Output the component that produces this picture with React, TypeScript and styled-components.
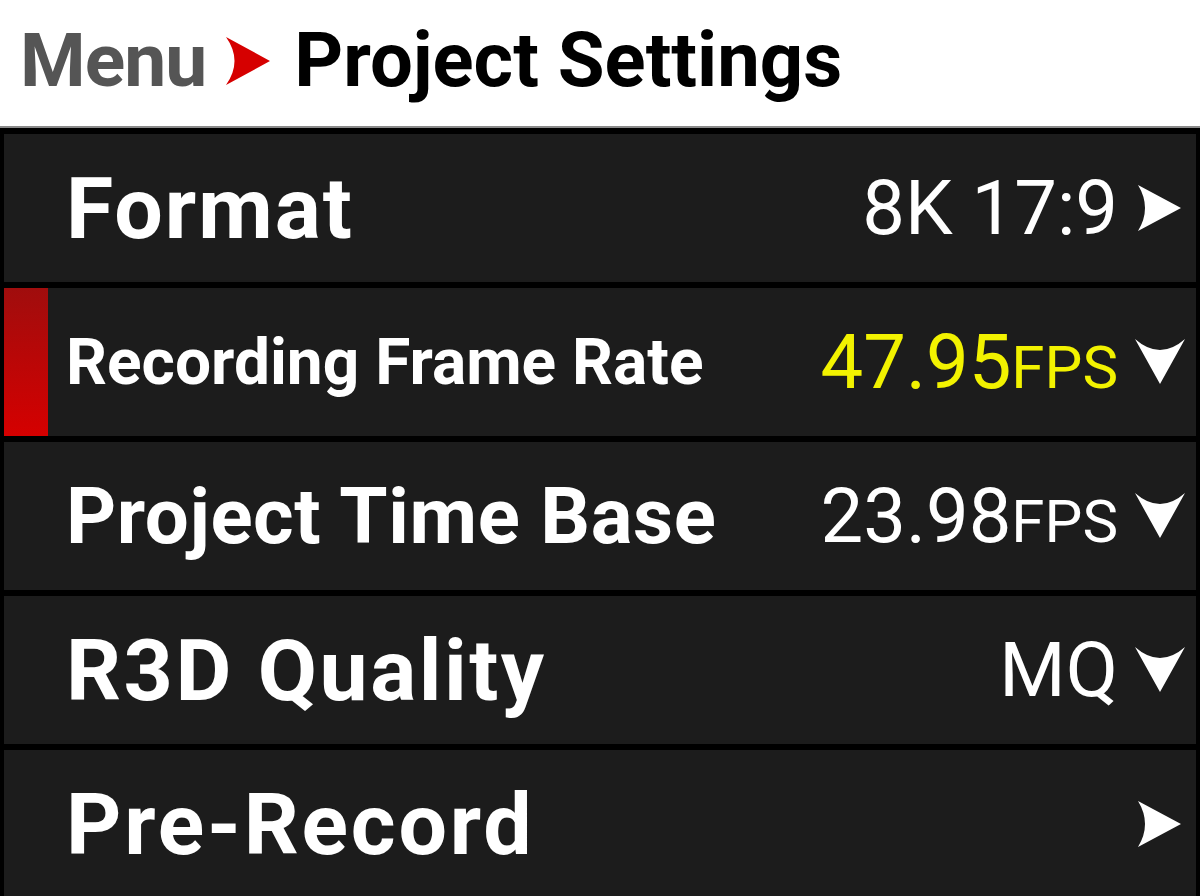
import React from 'react';
import styled, { createGlobalStyle } from 'styled-components';

const GlobalStyle = createGlobalStyle`
	html, body {
		margin: 0;
		padding: 0;
		background: #000;
		overflow: hidden;
	}
	body {
		font-family: Roboto, 'Liberation Sans', sans-serif;
	}
`;

type Row = {
	label: string;
	labelSize: number;
	spacing: number;
	value?: string;
	unit?: string;
	arrow: 'right' | 'down';
	active?: boolean;
};

const rows: Row[] = [
	{ label: 'Format', labelSize: 86, spacing: 2, value: '8K 17:9', arrow: 'right' },
	{ label: 'Recording Frame Rate', labelSize: 64, spacing: 0, value: '47.95', unit: 'FPS', arrow: 'down', active: true },
	{ label: 'Project Time Base', labelSize: 78, spacing: 0.6, value: '23.98', unit: 'FPS', arrow: 'down' },
	{ label: 'R3D Quality', labelSize: 86, spacing: 2.5, value: 'MQ', arrow: 'down' },
	{ label: 'Pre-Record', labelSize: 86, spacing: 2.8, arrow: 'right' },
];

const RightArrow = () => (
	<svg width="44" height="48" viewBox="0 0 44 48">
		<path d="M0 1 L43 24 L0 47 Q14 24 0 1 Z" fill="#fff" />
	</svg>
);

const DownArrow = () => (
	<svg width="50" height="46" viewBox="0 0 50 46">
		<path d="M0 0 Q25 22 50 0 L25 45 Z" fill="#fff" />
	</svg>
);

const App: React.FC = () => (
	<>
		<GlobalStyle />
		<Page>
			<Header>
				<Crumb>Menu</Crumb>
				<Chevron>
					<svg width="44" height="48" viewBox="0 0 44 48">
						<path d="M0 0 L44 24 L0 48 Q17 24 0 0 Z" fill="#d60000" />
					</svg>
				</Chevron>
				<Title>Project Settings</Title>
			</Header>
			<List>
				{rows.map((row) => (
					<Item key={row.label}>
						<Indicator active={row.active} />
						<Label size={row.labelSize} spacing={row.spacing}>
							{row.label}
						</Label>
						<Value highlight={row.active}>
							{row.value}
							{row.unit && <Unit>{row.unit}</Unit>}
						</Value>
						<ArrowBox>{row.arrow === 'right' ? <RightArrow /> : <DownArrow />}</ArrowBox>
					</Item>
				))}
			</List>
		</Page>
	</>
);

const Page = styled.div`
	width: 1200px;
	height: 896px;
	display: flex;
	flex-direction: column;
	overflow: hidden;
`;

const Header = styled.div`
	height: 128px;
	flex-shrink: 0;
	box-sizing: border-box;
	background: #fff;
	border-bottom: 2px solid #8a8a8a;
	display: flex;
	align-items: center;
	padding: 0 0 6px 20px;
`;

const Crumb = styled.span`
	font-size: 75px;
	font-weight: 700;
	color: #555;
	letter-spacing: -1px;
`;

const Chevron = styled.span`
	display: flex;
	margin: 2px 24px 0 20px;
`;

const Title = styled.span`
	font-size: 76px;
	font-weight: 700;
	color: #000;
	letter-spacing: 0;
`;

const List = styled.div`
	flex: 1;
	background: #000;
	padding: 6px 4px 4px;
	display: flex;
	flex-direction: column;
	gap: 6px;
`;

const Item = styled.div`
	height: 148px;
	flex-shrink: 0;
	background: #1c1c1c;
	display: flex;
	align-items: center;
	padding-right: 11px;
`;

const Indicator = styled.div<{ active?: boolean }>`
	width: 44px;
	align-self: stretch;
	margin-right: 18px;
	background: ${(p) => (p.active ? 'linear-gradient(#a00d0d, #d50000)' : 'transparent')};
`;

const Label = styled.span<{ size: number; spacing: number }>`
	flex: 1;
	font-size: ${(p) => p.size}px;
	font-weight: 700;
	color: #fff;
	white-space: nowrap;
	letter-spacing: ${(p) => p.spacing}px;
`;

const Value = styled.span<{ highlight?: boolean }>`
	font-size: 76px;
	font-weight: 400;
	color: ${(p) => (p.highlight ? '#f2f200' : '#fff')};
	white-space: nowrap;
`;

const Unit = styled.span`
	font-size: 60px;
`;

const ArrowBox = styled.span`
	width: 50px;
	display: flex;
	justify-content: center;
	margin-left: 17px;
`;

export default App;
